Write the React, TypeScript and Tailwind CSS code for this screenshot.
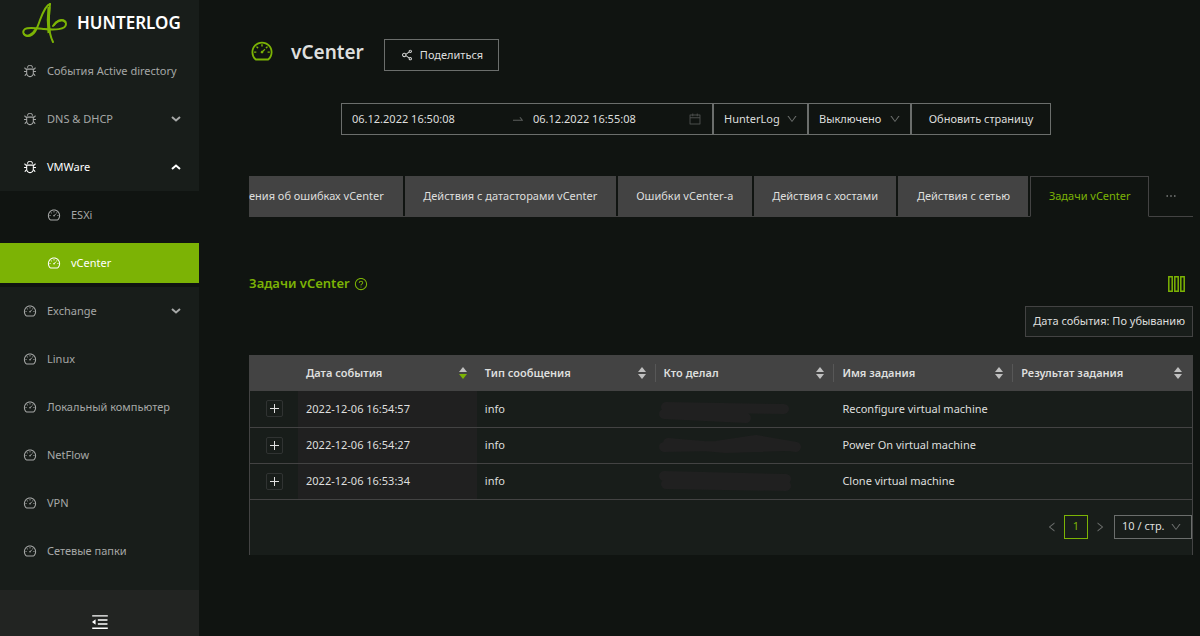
import React, { useState } from "react";
import {
  AiOutlineBug,
  AiOutlineCalendar,
  AiOutlineDashboard,
  AiOutlineDown,
  AiOutlineEllipsis,
  AiOutlineLeft,
  AiOutlineMenuFold,
  AiOutlineQuestionCircle,
  AiOutlineRight,
  AiOutlineShareAlt,
  AiOutlineSwapRight,
} from "react-icons/ai";

type MenuItem = {
  label: string;
  icon: "bug" | "dash";
  children?: string[];
  expandable?: boolean;
};

const menu: MenuItem[] = [
  { label: "События Active directory", icon: "bug" },
  { label: "DNS & DHCP", icon: "bug", expandable: true },
  {
    label: "VMWare",
    icon: "bug",
    expandable: true,
    children: ["ESXi", "vCenter"],
  },
  { label: "Exchange", icon: "dash", expandable: true },
  { label: "Linux", icon: "dash" },
  { label: "Локальный компьютер", icon: "dash" },
  { label: "NetFlow", icon: "dash" },
  { label: "VPN", icon: "dash" },
  { label: "Сетевые папки", icon: "dash" },
];

const tabs = [
  "ения об ошибках vCenter",
  "Действия с датасторами vCenter",
  "Ошибки vCenter-а",
  "Действия с хостами",
  "Действия с сетью",
  "Задачи vCenter",
];

const columns = [
  "Дата события",
  "Тип сообщения",
  "Кто делал",
  "Имя задания",
  "Результат задания",
];

const rows = [
  {
    date: "2022-12-06 16:54:57",
    type: "info",
    task: "Reconfigure virtual machine",
    smudge: "M10 15 L128 17 M8 22 L90 26",
  },
  {
    date: "2022-12-06 16:54:27",
    type: "info",
    task: "Power On virtual machine",
    smudge: "M8 19 L60 18 L100 12 L140 19 M12 15 L70 20 L130 18",
  },
  {
    date: "2022-12-06 16:53:34",
    type: "info",
    task: "Clone virtual machine",
    smudge: "M8 12 L130 15 M10 20 L130 22 M12 17 L128 19",
  },
];

const Logo: React.FC = () => (
  <svg
    width="46"
    height="42"
    viewBox="0 0 46 42"
    fill="none"
    stroke="#7cb305"
    strokeLinecap="round"
    strokeLinejoin="round"
    aria-hidden="true"
  >
    <path
      d="M28 2C24 3 21 10 18 18C15 27 12 34 6 34C1 34 0 29 3 27C6 25 13 26 22 27C32 28 44 28 44 22C44 16 35 18 31 24"
      strokeWidth="2"
    />
    <path d="M2 32C5 36 11 32 13 28M43 20C40 16 34 19 32 23" strokeWidth="2" />
    <path d="M28 2C27 12 25 28 31 40" strokeWidth="2" />
    <path d="M27 5C26 14 26 22 27 31" strokeWidth="3" strokeLinecap="butt" />
  </svg>
);

const Chevron: React.FC<{ up?: boolean }> = ({ up }) => (
  <svg
    width="10"
    height="6"
    viewBox="0 0 10 6"
    fill="none"
    stroke="currentColor"
    strokeWidth="2"
    className={up ? "rotate-180" : ""}
    aria-hidden="true"
  >
    <path d="M1 1L5 4.5L9 1" />
  </svg>
);

const Sorter: React.FC<{ desc?: boolean }> = ({ desc }) => (
  <svg width="8" height="12" viewBox="0 0 8 12" aria-hidden="true">
    <path d="M4 0L8 5H0Z" fill="#bfbfbf" />
    <path d="M4 12L8 7H0Z" fill={desc ? "#7cb305" : "#bfbfbf"} />
  </svg>
);

const Sidebar: React.FC = () => {
  const [open, setOpen] = useState("VMWare");

  return (
    <aside className="flex min-h-screen w-[199px] shrink-0 flex-col bg-[#181d1a] text-[#a6a8a7]">
      <div className="flex h-[47px] items-center gap-[9px] pb-0.5 pl-[22px]">
        <Logo />
        <span className="text-[17px] font-semibold text-white">HUNTERLOG</span>
      </div>

      <nav>
        {menu.map((item) => {
          const isOpen = open === item.label;
          const Icon = item.icon === "bug" ? AiOutlineBug : AiOutlineDashboard;
          return (
            <div key={item.label}>
              <button
                onClick={() => item.children && setOpen(isOpen ? "" : item.label)}
                className={`flex h-12 w-full items-center pr-[18px] pl-[23px] whitespace-nowrap ${
                  isOpen ? "text-white" : ""
                }`}
              >
                <Icon className="mr-2.5 size-3.5 shrink-0" />
                {item.label}
                {item.expandable && (
                  <span className="ml-auto">
                    <Chevron up={isOpen} />
                  </span>
                )}
              </button>

              {isOpen && item.children && (
                <div className="bg-[#101411]">
                  {item.children.map((child) => (
                    <div key={child} className="py-1">
                      <a
                        href="#"
                        className={`flex h-10 items-center pl-[47px] ${
                          child === "vCenter" ? "bg-[#7cb305] text-white" : ""
                        }`}
                      >
                        <AiOutlineDashboard className="mr-2.5 size-3.5 shrink-0" />
                        {child}
                      </a>
                    </div>
                  ))}
                </div>
              )}
            </div>
          );
        })}
      </nav>

      <button
        aria-label="Свернуть меню"
        className="mt-auto flex justify-center bg-[#222422] pt-[22px] pb-1 text-white"
      >
        <AiOutlineMenuFold className="size-5" />
      </button>
    </aside>
  );
};

const Toolbar: React.FC = () => (
  <div className="mt-8 flex justify-center">
    <div className="flex h-8 w-[372px] items-center border border-[#6b6e6c] px-2.5">
      <input
        aria-label="Начало"
        defaultValue="06.12.2022 16:50:08"
        className="w-0 flex-1 outline-none"
      />
      <AiOutlineSwapRight className="mr-2 ml-1 size-3.5 text-[#5c5f5d]" />
      <input
        aria-label="Конец"
        defaultValue="06.12.2022 16:55:08"
        className="w-0 flex-1 outline-none"
      />
      <AiOutlineCalendar className="size-3.5 text-[#4b4e4c]" />
    </div>
    <div className="relative">
      <select
        aria-label="Источник"
        className="h-8 w-[95px] appearance-none border border-[#6b6e6c] pl-2.5"
      >
        <option>HunterLog</option>
      </select>
      <AiOutlineDown className="pointer-events-none absolute top-2.5 right-2.5 size-3 text-[#6b6e6c]" />
    </div>
    <div className="relative">
      <select
        aria-label="Автообновление"
        className="h-8 w-[103px] appearance-none border border-[#6b6e6c] pl-2.5"
      >
        <option>Выключено</option>
      </select>
      <AiOutlineDown className="pointer-events-none absolute top-2.5 right-2.5 size-3 text-[#6b6e6c]" />
    </div>
    <button className="h-8 w-[140px] border border-[#6b6e6c]">
      Обновить страницу
    </button>
  </div>
);

const Tabs: React.FC = () => {
  const [active, setActive] = useState("Задачи vCenter");

  return (
    <div className="mt-[41px] flex border-b border-[#434343]">
      <div role="tablist" className="-mb-px flex grow gap-0.5">
        {tabs.map((tab, i) => (
          <button
            key={tab}
            role="tab"
            aria-selected={tab === active}
            onClick={() => setActive(tab)}
            className={`h-[41px] border border-[#434343] whitespace-nowrap ${
              i === 0 ? "border-l-0 pr-[18px] text-left" : "grow px-4"
            } ${
              tab === active
                ? "border-b-[#101411] bg-[#101411] text-[#7cb305]"
                : "bg-[#434343]"
            }`}
          >
            {tab}
          </button>
        ))}
      </div>
      <button
        aria-label="Ещё"
        className="flex w-11 items-center justify-center text-[#a6a8a7]"
      >
        <AiOutlineEllipsis className="size-3.5" />
      </button>
    </div>
  );
};

const EventsTable: React.FC = () => (
  <div className="mt-[18px] border-x border-[#434343] bg-[#181d1a]">
    <table className="w-full table-fixed border-collapse text-left">
      <thead>
        <tr className="h-9 bg-[#434343]">
          <th className="w-12" />
          {columns.map((name, i) => (
            <th key={name} className="p-0 font-semibold">
              <div
                className={`flex h-[18px] items-center justify-between pr-2.5 pl-2 ${
                  i > 1 ? "shadow-[-1px_0_0_#575757]" : ""
                }`}
              >
                {name}
                <Sorter desc={i === 0} />
              </div>
            </th>
          ))}
        </tr>
      </thead>
      <tbody>
        {rows.map((row) => (
          <tr key={row.date} className="h-9 border-b border-[#434343]">
            <td className="p-0">
              <button
                aria-label="Развернуть строку"
                className="mx-auto flex size-[17px] items-center justify-center rounded-xs border border-[#303332]"
              >
                <svg width="9" height="9" viewBox="0 0 9 9" stroke="#e0e0e0">
                  <path d="M4.5 0V9M0 4.5H9" />
                </svg>
              </button>
            </td>
            <td className="bg-[#202020] px-2 py-0">{row.date}</td>
            <td className="px-2 py-0">{row.type}</td>
            <td className="p-0">
              <svg
                width="150"
                height="34"
                viewBox="0 0 150 34"
                fill="none"
                stroke="#202020"
                strokeWidth="10"
                strokeLinecap="round"
                strokeLinejoin="round"
                aria-hidden="true"
              >
                <path d={row.smudge} />
              </svg>
            </td>
            <td className="px-2 py-0 whitespace-nowrap">{row.task}</td>
            <td />
          </tr>
        ))}
      </tbody>
    </table>

    <div className="flex items-center justify-end pt-[15px] pb-4">
      <button aria-label="Назад" className="px-1.5 text-[#6b6e6c]">
        <AiOutlineLeft className="size-3" />
      </button>
      <button className="size-6 border border-[#7cb305] text-[#7cb305]">1</button>
      <button aria-label="Вперёд" className="px-1.5 text-[#6b6e6c]">
        <AiOutlineRight className="size-3" />
      </button>
      <div className="relative ml-0.5">
        <select
          aria-label="Строк на странице"
          className="h-6 w-[78px] appearance-none border border-[#6b6e6c] pl-[7px]"
        >
          <option>10 / стр.</option>
        </select>
        <AiOutlineDown className="pointer-events-none absolute top-1.5 right-2.5 size-3 text-[#6b6e6c]" />
      </div>
    </div>
  </div>
);

const App: React.FC = () => {
  return (
    <div className="flex min-h-screen bg-[#101411] font-['Noto_Sans','Open_Sans',sans-serif] text-[11px] text-[#dedfde]">
      <Sidebar />

      <main className="min-w-0 flex-1 pt-[39px] pr-[7px]">
        <header className="flex h-8 items-start pl-[51px]">
          <AiOutlineDashboard className="size-6 text-[#7cb305]" />
          <h1 className="ml-[17px] text-[19px] leading-[26px] font-semibold">
            vCenter
          </h1>
          <button className="ml-5 flex h-8 items-center gap-1.5 border border-[#6b6e6c] px-[15px]">
            <AiOutlineShareAlt className="size-3.5" />
            Поделиться
          </button>
        </header>

        <Toolbar />

        <div className="pl-[50px]">
          <Tabs />

          <div className="mt-[57px] flex h-5 items-center justify-between">
            <h2 className="flex items-center gap-1 text-[13px] font-semibold text-[#7cb305]">
              Задачи vCenter
              <AiOutlineQuestionCircle className="size-3.5" />
            </h2>
            <button aria-label="Столбцы" className="mr-2">
              <svg width="17" height="16" viewBox="0 0 17 16" fill="none" stroke="#7cb305" strokeWidth="1.5">
                <path d="M0.8 0.8H4.2V15.2H0.8ZM6.8 0.8H10.2V15.2H6.8ZM12.8 0.8H16.2V15.2H12.8Z" />
              </svg>
            </button>
          </div>

          <div className="mt-3 flex justify-end">
            <button className="h-[31px] border border-[#434343] bg-[#181d1a] px-[7px]">
              Дата события: По убыванию
            </button>
          </div>

          <EventsTable />
        </div>
      </main>
    </div>
  );
};

export default App;
